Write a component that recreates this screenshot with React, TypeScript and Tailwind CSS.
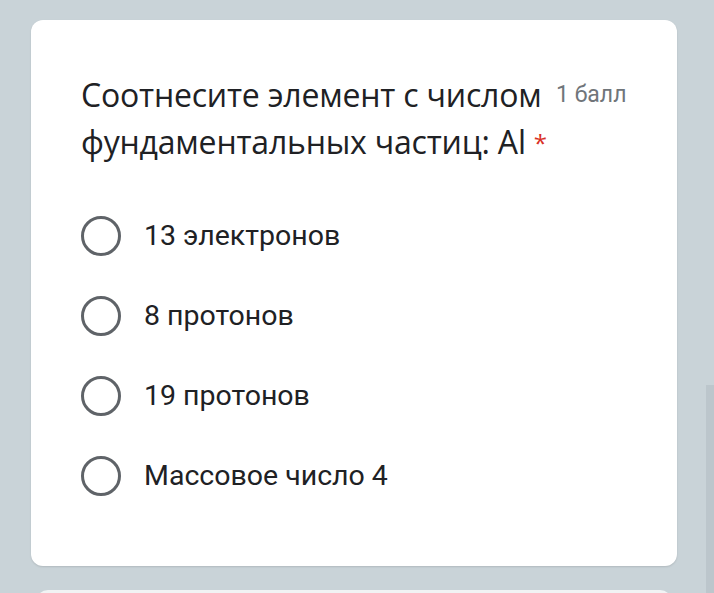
const options = ["13 электронов", "8 протонов", "19 протонов", "Массовое число 4"];

function Radio() {
  return (
    <span className="block h-[40px] w-[40px] shrink-0 rounded-full border-[3.5px] border-[#5f6368]" />
  );
}

export default function App() {
  return (
    <div className="relative h-[593px] w-[714px] overflow-hidden bg-[#c9d3d8] pt-[20px]">
      <div className="ml-[31px] h-[546px] w-[646px] rounded-[12px] bg-white px-[50px] pt-[51px] shadow-[0_1px_2px_rgba(0,0,0,0.12)]">
        <div className="flex items-start font-['Open_Sans',sans-serif] text-[32px] leading-[47px] tracking-[-0.2px] text-[#202124]">
          <div className="w-[468px]">
            Соотнесите элемент с числом фундаментальных частиц: Al
            <span className="relative top-[5px] ml-[8px] inline-block align-top text-[24px] leading-[40px] text-[#d93025]">*</span>
          </div>
          <span className="ml-[7px] whitespace-nowrap pt-[4px] font-['Roboto',sans-serif] text-[23px] leading-[40px] tracking-normal text-[#70757a]">
            1 балл
          </span>
        </div>
        <div className="mt-[51px] flex flex-col gap-[40px]">
          {options.map((o) => (
            <label key={o} className="flex h-[40px] items-center">
              <Radio />
              <span className="ml-[23px] font-['Roboto',sans-serif] text-[28.5px] text-[#202124]">{o}</span>
            </label>
          ))}
        </div>
      </div>
      <div className="ml-[36px] mt-[24px] h-[40px] w-[636px] rounded-t-[12px] bg-[#f1f3f4]" />
      <div className="absolute right-0 top-[385px] h-[208px] w-[8px] bg-[#bcc6cc]" />
    </div>
  );
}
